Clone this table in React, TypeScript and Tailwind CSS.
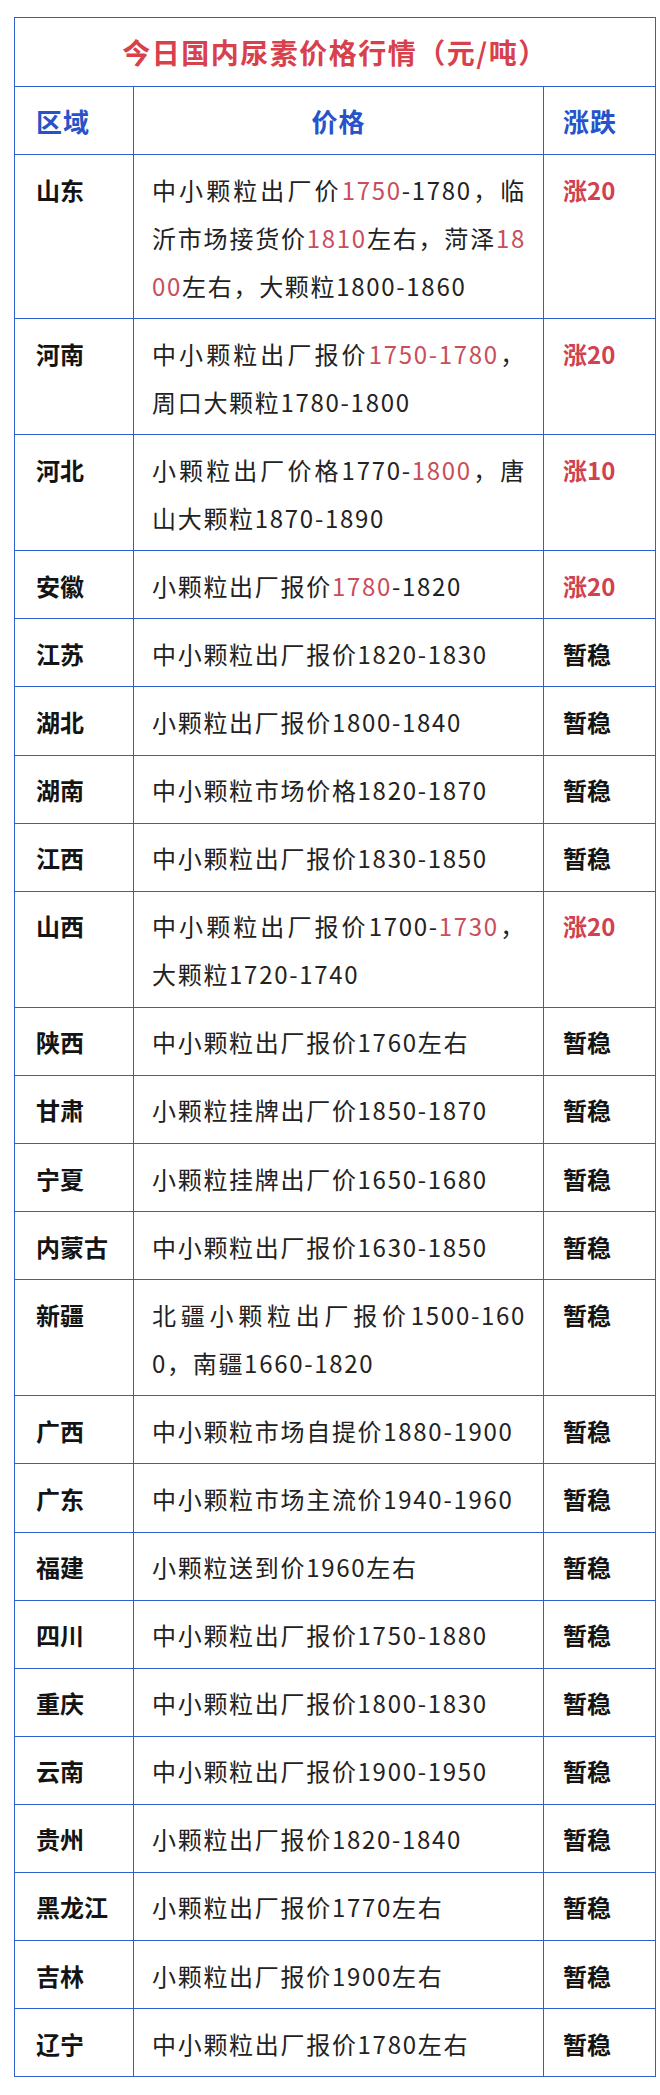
import React from 'react';

type Seg = [string, boolean?];
type Row = { region: string; lines: Seg[][]; change: string };

const rows: Row[] = [
  {
    region: '山东',
    lines: [
      [['中小颗粒出厂价'], ['1750', true], ['-1780，临']],
      [['沂市场接货价'], ['1810', true], ['左右，菏泽'], ['18', true]],
      [['00', true], ['左右，大颗粒1800-1860']],
    ],
    change: '涨20',
  },
  {
    region: '河南',
    lines: [[['中小颗粒出厂报价'], ['1750-1780', true], ['，']], [['周口大颗粒1780-1800']]],
    change: '涨20',
  },
  {
    region: '河北',
    lines: [[['小颗粒出厂价格1770-'], ['1800', true], ['，唐']], [['山大颗粒1870-1890']]],
    change: '涨10',
  },
  { region: '安徽', lines: [[['小颗粒出厂报价'], ['1780', true], ['-1820']]], change: '涨20' },
  { region: '江苏', lines: [[['中小颗粒出厂报价1820-1830']]], change: '暂稳' },
  { region: '湖北', lines: [[['小颗粒出厂报价1800-1840']]], change: '暂稳' },
  { region: '湖南', lines: [[['中小颗粒市场价格1820-1870']]], change: '暂稳' },
  { region: '江西', lines: [[['中小颗粒出厂报价1830-1850']]], change: '暂稳' },
  {
    region: '山西',
    lines: [[['中小颗粒出厂报价1700-'], ['1730', true], ['，']], [['大颗粒1720-1740']]],
    change: '涨20',
  },
  { region: '陕西', lines: [[['中小颗粒出厂报价1760左右']]], change: '暂稳' },
  { region: '甘肃', lines: [[['小颗粒挂牌出厂价1850-1870']]], change: '暂稳' },
  { region: '宁夏', lines: [[['小颗粒挂牌出厂价1650-1680']]], change: '暂稳' },
  { region: '内蒙古', lines: [[['中小颗粒出厂报价1630-1850']]], change: '暂稳' },
  {
    region: '新疆',
    lines: [[['北疆小颗粒出厂报价1500-160']], [['0，南疆1660-1820']]],
    change: '暂稳',
  },
  { region: '广西', lines: [[['中小颗粒市场自提价1880-1900']]], change: '暂稳' },
  { region: '广东', lines: [[['中小颗粒市场主流价1940-1960']]], change: '暂稳' },
  { region: '福建', lines: [[['小颗粒送到价1960左右']]], change: '暂稳' },
  { region: '四川', lines: [[['中小颗粒出厂报价1750-1880']]], change: '暂稳' },
  { region: '重庆', lines: [[['中小颗粒出厂报价1800-1830']]], change: '暂稳' },
  { region: '云南', lines: [[['中小颗粒出厂报价1900-1950']]], change: '暂稳' },
  { region: '贵州', lines: [[['小颗粒出厂报价1820-1840']]], change: '暂稳' },
  { region: '黑龙江', lines: [[['小颗粒出厂报价1770左右']]], change: '暂稳' },
  { region: '吉林', lines: [[['小颗粒出厂报价1900左右']]], change: '暂稳' },
  { region: '辽宁', lines: [[['中小颗粒出厂报价1780左右']]], change: '暂稳' },
];

function PriceRow({ row }: { row: Row }) {
  const up = row.change.startsWith('涨');
  return (
    <div className="grid grid-cols-[119px_410px_111px] border-b border-[#3060cc] last:border-b-0">
      <div className="border-r border-[#3060cc] pl-[21px] pt-[10.5px] pb-[8.6px] text-[24px] leading-[48px] font-bold text-[#141414]">
        {row.region}
      </div>
      <div className="border-r border-[#3060cc] pl-[18px] pr-[17px] pt-[10.5px] pb-[8.6px] text-[24px] leading-[48px] tracking-[1.7px] text-[#222]">
        {row.lines.map((line, i) => (
          <div
            key={i}
            className={i < row.lines.length - 1 ? 'text-justify [text-align-last:justify]' : ''}
          >
            {line.map(([text, red], j) =>
              red ? (
                <span key={j} className="text-[#c94d5a]">
                  {text}
                </span>
              ) : (
                <span key={j}>{text}</span>
              )
            )}
          </div>
        ))}
      </div>
      <div
        className={`pl-[19px] pt-[10.5px] pb-[8.6px] text-[24px] leading-[48px] font-bold ${
          up ? 'text-[#d1414e]' : 'text-[#141414]'
        }`}
      >
        {row.change}
      </div>
    </div>
  );
}

export default function App() {
  return (
    <div className="min-h-[2095px] bg-white pl-[14px] pt-[17px] font-['Noto_Sans_CJK_SC','Noto_Sans',sans-serif]">
      <div className="w-[642px] border border-[#3060cc]">
        {/* title */}
        <div className="flex h-[69px] items-center justify-center border-b border-[#3060cc] text-[28px] font-bold tracking-[1.5px] text-[#d8414c]">
          今日国内尿素价格行情（元/吨）
        </div>

        {/* column headers */}
        <div className="grid h-[68px] grid-cols-[119px_410px_111px] border-b border-[#3060cc] text-[26px] font-bold tracking-[1px] text-[#2653c9]">
          <div className="flex items-center border-r border-[#3060cc] pl-[21px]">区域</div>
          <div className="flex items-center justify-center border-r border-[#3060cc]">价格</div>
          <div className="flex items-center pl-[19px]">涨跌</div>
        </div>

        {rows.map((row) => (
          <PriceRow key={row.region} row={row} />
        ))}
      </div>
    </div>
  );
}
